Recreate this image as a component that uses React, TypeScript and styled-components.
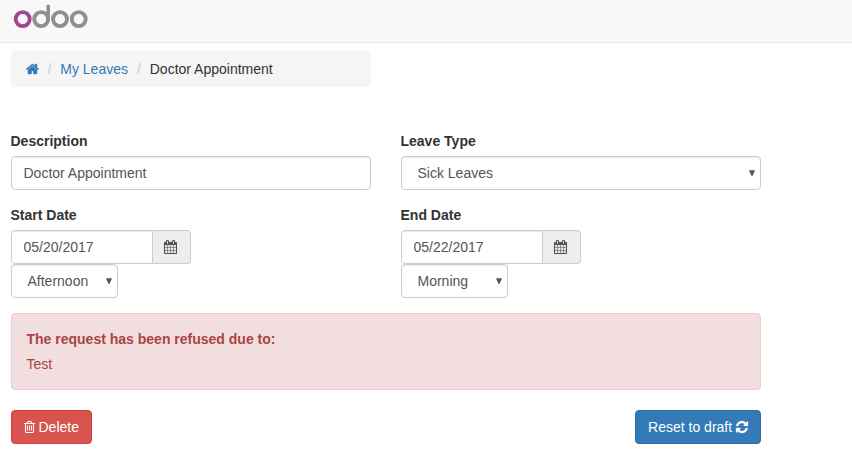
import React from "react";
import styled, { createGlobalStyle } from "styled-components";

const GlobalStyle = createGlobalStyle`
  *, *::before, *::after { box-sizing: border-box; }
  body {
    margin: 0;
    background: #fff;
    color: #333;
    font: 14px/20px "Liberation Sans", Arial, sans-serif;
  }
`;

const NavBar = styled.header`
  height: 43px;
  padding: 3px 0 0 13px;
  background: #f8f8f8;
  border-bottom: 1px solid #e7e7e7;
`;

const LogoSvg = styled.svg`
  display: block;
`;

const Page = styled.main`
  width: 750px;
  margin: 8px 0 0 10.5px;
`;

const Breadcrumb = styled.nav`
  display: flex;
  align-items: center;
  width: 360px;
  height: 36px;
  padding: 0 15px;
  background: #f5f5f5;
  border-radius: 4px;
`;

const Crumb = styled.a`
  display: flex;
  color: #337ab7;
  text-decoration: none;
`;

const CurrentCrumb = styled.span`
  color: #333;
`;

const Separator = styled.span`
  padding: 0 8.95px;
  color: #ccc;
`;

const Form = styled.form`
  margin-top: 44px;
`;

const FieldGrid = styled.div`
  display: grid;
  grid-template-columns: 360px 360px;
  column-gap: 30px;
  row-gap: 15px;
`;

const Label = styled.label`
  display: block;
  margin-bottom: 5px;
  font-weight: bold;
`;

const TextInput = styled.input`
  display: block;
  width: 100%;
  min-width: 0;
  height: 34px;
  padding: 6px 12px;
  color: #555;
  font: inherit;
  background: #fff;
  border: 1px solid #ccc;
  border-radius: 4px;
  box-shadow: inset 0 1px 1px rgba(0, 0, 0, 0.075);
  outline: none;
`;

const InputGroup = styled.div`
  display: flex;
  width: 180px;

  ${TextInput} {
    border-radius: 4px 0 0 4px;
  }
`;

const Addon = styled.span`
  display: flex;
  flex: 0 0 38px;
  align-items: center;
  padding-left: 11.5px;
  color: #555;
  background: #eee;
  border: 1px solid #ccc;
  border-left: 0;
  border-radius: 0 4px 4px 0;
`;

const SelectBox = styled.div<{ $width: string }>`
  display: flex;
  align-items: center;
  justify-content: space-between;
  width: ${(p) => p.$width};
  height: 34px;
  padding: 0 5px 0 16px;
  color: #555;
  background: #fff;
  border: 1px solid #ccc;
  border-radius: 4px;
  box-shadow: inset 0 1px 1px rgba(0, 0, 0, 0.075);
`;

const Alert = styled.section`
  height: 77px;
  margin-top: 15px;
  padding: 15px;
  color: #a94442;
  background: #f2dede;
  border: 1px solid #ebccd1;
  border-radius: 4px;
`;

const AlertTitle = styled.strong`
  display: block;
  margin-bottom: 5px;
`;

const AlertText = styled.p`
  margin: 0;
`;

const Actions = styled.div`
  display: flex;
  justify-content: space-between;
  margin-top: 20px;
`;

const Button = styled.button<{ $tone: "danger" | "primary" }>`
  display: flex;
  align-items: center;
  gap: ${(p) => (p.$tone === "danger" ? "4px" : "3.5px")};
  height: 34px;
  padding: 0 ${(p) => (p.$tone === "danger" ? "12px" : "11.9px")};
  color: #fff;
  font: inherit;
  white-space: nowrap;
  background: ${(p) => (p.$tone === "danger" ? "#d9534f" : "#337ab7")};
  border: 1px solid ${(p) => (p.$tone === "danger" ? "#d43f3a" : "#2e6da4")};
  border-radius: 4px;
`;

const Glyph = styled.svg`
  display: block;
  flex: none;
  overflow: visible;
  fill: currentColor;
  stroke: currentColor;
`;

const icons = {
  home: {
    x: 64,
    w: 1664,
    weight: 50,
    d: "M1472 992v480q0 26-19 45t-45 19h-384v-384h-256v384h-384q-26 0-45-19t-19-45v-480q0-1 .5-3t.5-3l575-474 575 474q1 2 1 6zm223-69l-62 74q-8 9-21 11h-3q-13 0-21-7l-692-577-692 577q-12 8-24 7-13-2-21-11l-62-74q-8-10-7-23.5t11-21.5l719-599q32-26 76-26t76 26l244 204v-195q0-14 9-23t23-9h192q14 0 23 9t9 23v408l219 182q10 8 11 21.5t-7 23.5z",
  },
  calendar: {
    x: 64,
    w: 1664,
    weight: 10,
    d: "M192 1664h288v-288h-288v288zm352 0h320v-288h-320v288zm-352-352h288v-320h-288v320zm352 0h320v-320h-320v320zm-352-384h288v-288h-288v288zm736 736h320v-288h-320v288zm-384-736h320v-288h-320v288zm768 736h288v-288h-288v288zm-384-352h320v-320h-320v320zm-352-864v-288q0-13-9.5-22.5t-22.5-9.5h-64q-13 0-22.5 9.5t-9.5 22.5v288q0 13 9.5 22.5t22.5 9.5h64q13 0 22.5-9.5t9.5-22.5zm736 864h288v-320h-288v320zm-384-384h320v-288h-320v288zm384 0h288v-288h-288v288zm32-480v-288q0-13-9.5-22.5t-22.5-9.5h-64q-13 0-22.5 9.5t-9.5 22.5v288q0 13 9.5 22.5t22.5 9.5h64q13 0 22.5-9.5t9.5-22.5zm384-64v1280q0 52-38 90t-90 38h-1408q-52 0-90-38t-38-90v-1280q0-52 38-90t90-38h128v-96q0-66 47-113t113-47h64q66 0 113 47t47 113v96h384v-96q0-66 47-113t113-47h64q66 0 113 47t47 113v96h128q52 0 90 38t38 90z",
  },
  trash: {
    x: 192,
    w: 1408,
    weight: 10,
    d: "M704 736v576q0 14-9 23t-23 9h-64q-14 0-23-9t-9-23v-576q0-14 9-23t23-9h64q14 0 23 9t9 23zm256 0v576q0 14-9 23t-23 9h-64q-14 0-23-9t-9-23v-576q0-14 9-23t23-9h64q14 0 23 9t9 23zm256 0v576q0 14-9 23t-23 9h-64q-14 0-23-9t-9-23v-576q0-14 9-23t23-9h64q14 0 23 9t9 23zm128 724v-948h-896v948q0 22 7 40.5t14.5 27 10.5 8.5h832q3 0 10.5-8.5t14.5-27 7-40.5zm-672-1076h448l-48-117q-7-9-17-11h-317q-10 2-17 11zm928 32v64q0 14-9 23t-23 9h-96v948q0 83-47 143.5t-113 60.5h-832q-66 0-113-58.5t-47-141.5v-952h-96q-14 0-23-9t-9-23v-64q0-14 9-23t23-9h309l70-167q15-37 54-63t79-26h320q40 0 79 26t54 63l70 167h309q14 0 23 9t9 23z",
  },
  refresh: {
    x: 128,
    w: 1536,
    weight: 40,
    d: "M1639 1056q0 5-1 7-64 268-268 434.5t-478 166.5q-146 0-282.5-55t-243.5-157l-129 129q-19 19-45 19t-45-19-19-45v-448q0-26 19-45t45-19h448q26 0 45 19t19 45-19 45l-137 137q71 66 161 102t187 36q134 0 250-65t186-179q11-17 53-117 8-23 30-23h192q13 0 22.5 9.5t9.5 22.5zm25-800v448q0 26-19 45t-45 19h-448q-26 0-45-19t-19-45 19-45l138-138q-148-137-349-137-134 0-250 65t-186 179q-11 17-53 117-8 23-30 23h-199q-13 0-22.5-9.5t-9.5-22.5v-7q65-268 270-434.5t480-166.5q146 0 284 55.5t245 156.5l130-129q19-19 45-19t45 19 19 45z",
  },
};

function Icon({ name }: { name: keyof typeof icons }) {
  const { x, w, d, weight } = icons[name];
  return (
    <Glyph width={w / 128} height={14} viewBox={`${x} 0 ${w} 1792`} strokeWidth={weight} aria-hidden="true">
      <path d={d} />
    </Glyph>
  );
}

function Logo() {
  return (
    <LogoSvg width="76" height="28" viewBox="13 3 76 28" fill="none" strokeWidth="3.9" role="img" aria-label="odoo">
      <circle cx="22.7" cy="19.1" r="7" stroke="#a3478c" />
      <g stroke="#8f8f8f">
        <circle cx="41.2" cy="19.1" r="7" />
        <path d="M48.2 19V6.2" strokeLinecap="round" strokeWidth="3.6" />
        <circle cx="60" cy="19.1" r="7" />
        <circle cx="78.7" cy="19.1" r="7" />
      </g>
    </LogoSvg>
  );
}

function Select({ value, width = "100%" }: { value: string; width?: string }) {
  return (
    <SelectBox $width={width} role="combobox" aria-label={value}>
      {value}
      <Glyph width="6" height="6" viewBox="0 0 6 6" strokeWidth="0" aria-hidden="true">
        <path d="M0 0.2H6L3.6 5.8H2.4Z" />
      </Glyph>
    </SelectBox>
  );
}

function DateField({ label, date, period }: { label: string; date: string; period: string }) {
  return (
    <div>
      <Label>{label}</Label>
      <InputGroup>
        <TextInput defaultValue={date} />
        <Addon>
          <Icon name="calendar" />
        </Addon>
      </InputGroup>
      <Select value={period} width="107px" />
    </div>
  );
}

export default function App() {
  return (
    <>
      <GlobalStyle />
      <NavBar>
        <Logo />
      </NavBar>
      <Page>
        <Breadcrumb>
          <Crumb href="#" aria-label="Home">
            <Icon name="home" />
          </Crumb>
          <Separator>/</Separator>
          <Crumb href="#">My Leaves</Crumb>
          <Separator>/</Separator>
          <CurrentCrumb>Doctor Appointment</CurrentCrumb>
        </Breadcrumb>
        <Form>
          <FieldGrid>
            <div>
              <Label>Description</Label>
              <TextInput defaultValue="Doctor Appointment" />
            </div>
            <div>
              <Label>Leave Type</Label>
              <Select value="Sick Leaves" />
            </div>
            <DateField label="Start Date" date="05/20/2017" period="Afternoon" />
            <DateField label="End Date" date="05/22/2017" period="Morning" />
          </FieldGrid>
          <Alert>
            <AlertTitle>The request has been refused due to:</AlertTitle>
            <AlertText>Test</AlertText>
          </Alert>
          <Actions>
            <Button type="button" $tone="danger">
              <Icon name="trash" />
              Delete
            </Button>
            <Button type="button" $tone="primary">
              Reset to draft
              <Icon name="refresh" />
            </Button>
          </Actions>
        </Form>
      </Page>
    </>
  );
}
